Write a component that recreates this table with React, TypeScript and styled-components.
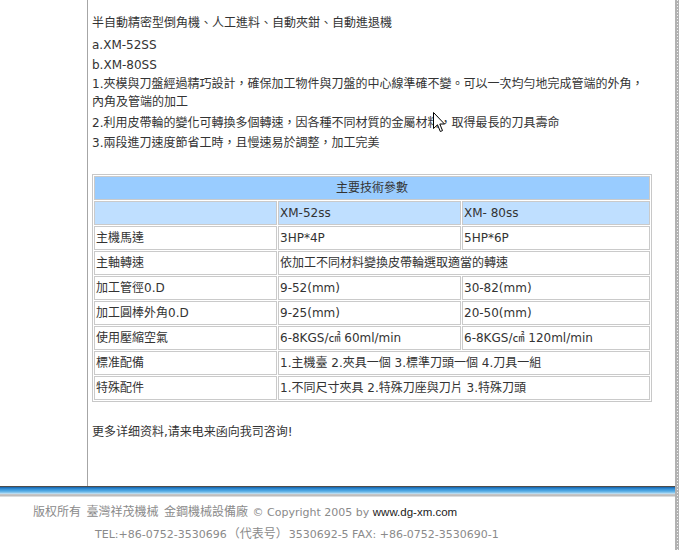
import React from "react";
import styled, { createGlobalStyle } from "styled-components";

const Global = createGlobalStyle`
  html, body { margin: 0; padding: 0; background: #fff; }
  body { font-family: "DejaVu Sans", "Noto Sans CJK TC", sans-serif; }
`;

const Page = styled.div`
  position: relative;
  display: flex;
  width: 679px;
  height: 550px;
  overflow: hidden;
  background: #fff;
`;

const Main = styled.div`
  width: 675px;
  display: flex;
  flex-direction: column;
`;

const Edge = styled.div`
  width: 4px;
  background-color: #b2b2b2;
  background-image: repeating-linear-gradient(to bottom, #f4f4f4 0 1px, transparent 1px 3px);
  background-size: 1px 100%;
  background-position: 2px 0;
  background-repeat: no-repeat;
`;

const Body = styled.div`
  display: flex;
  height: 486px;
`;

const Side = styled.div`
  width: 87px;
  border-right: 1px solid #a6a6a6;
`;

const Content = styled.div`
  width: 560px;
  padding: 13px 0 0 4px;
  font-size: 12px;
  color: #333;
`;

const Line = styled.div<{ $lh?: number; $mt?: number; $mb?: number }>`
  line-height: ${(p) => p.$lh ?? 20}px;
  margin-top: ${(p) => p.$mt ?? 0}px;
  margin-bottom: ${(p) => p.$mb ?? 0}px;
  white-space: nowrap;
`;

const Spec = styled.table`
  width: 560px;
  margin-top: 21px;
  border: 1px solid #c8c8c8;
  border-collapse: separate;
  border-spacing: 1px;
  table-layout: fixed;
  font-size: 12px;
  color: #333;
`;

const Col = styled.col<{ $w: number }>`
  width: ${(p) => p.$w}px;
`;

const Cell = styled.td<{ $bg?: string; $center?: boolean }>`
  height: 22px;
  padding: 0 1px;
  border: 1px solid #cacaca;
  background: ${(p) => p.$bg ?? "#fff"};
  text-align: ${(p) => (p.$center ? "center" : "left")};
  vertical-align: middle;
  line-height: 22px;
  white-space: nowrap;
  overflow: hidden;
`;

const Note = styled.div`
  margin-top: 20px;
  line-height: 20px;
`;

const Bar = styled.div`
  height: 11px;
  background: linear-gradient(
    to bottom,
    #4d4d4d 0 1px,
    #1b6db5 1px 2px,
    #2b84cc 2px 3px,
    #3a96da 3px 4px,
    #4aa3e0 4px 5px,
    #62b2e6 5px 6px,
    #86c5ec 6px 7px,
    #b6dbf2 7px 8px,
    #c6c6c6 8px 9px,
    #bdbdbd 9px 10px,
    #dcdcdc 10px 11px
  );
`;

const Footer = styled.div`
  padding-top: 4px;
  font-family: "DejaVu Sans", "Noto Sans CJK SC", sans-serif;
  font-size: 11px;
  color: #8a8a8a;
`;

const FootLine = styled.div<{ $indent: number }>`
  padding-left: ${(p) => p.$indent}px;
  line-height: 20px;
  white-space: nowrap;
`;

const Cjk = styled.span`
  font-family: "Noto Sans CJK TC", sans-serif;
  font-size: 12px;
  margin: 0 1px;
`;

const Site = styled.span`
  font-family: "Liberation Sans", Arial, sans-serif;
  font-size: 11.5px;
  color: #222;
`;

const Cursor = styled.svg`
  position: absolute;
  left: 433px;
  top: 112px;
`;

const rows: { label: string; a: string; b?: string }[] = [
  { label: "主機馬達", a: "3HP*4P", b: "5HP*6P" },
  { label: "主軸轉速", a: "依加工不同材料變換皮帶輪選取適當的轉速" },
  { label: "加工管徑0.D", a: "9-52(mm)", b: "30-82(mm)" },
  { label: "加工圓棒外角0.D", a: "9-25(mm)", b: "20-50(mm)" },
  { label: "使用壓縮空氣", a: "6-8KGS/㎠ 60ml/min", b: "6-8KGS/㎠ 120ml/min" },
  { label: "標准配備", a: "1.主機臺 2.夾具一個 3.標準刀頭一個 4.刀具一組" },
  { label: "特殊配件", a: "1.不同尺寸夾具 2.特殊刀座與刀片 3.特殊刀頭" },
];

export default function App() {
  return (
    <>
      <Global />
      <Page>
        <Main>
          <Body>
            <Side />
            <Content>
              <Line $mb={2}>半自動精密型倒角機、人工進料、自動夾鉗、自動進退機</Line>
              <Line>a.XM-52SS</Line>
              <Line>b.XM-80SS</Line>
              <Line $lh={18}>
                1.夾模與刀盤經過精巧設計，確保加工物件與刀盤的中心線準確不變。可以一次均勻地完成管端的外角，
                <br />
                內角及管端的加工
              </Line>
              <Line $mt={2}>2.利用皮帶輪的變化可轉換多個轉速，因各種不同材質的金屬材料，取得最長的刀具壽命</Line>
              <Line>3.兩段進刀速度節省工時，且慢速易於調整，加工完美</Line>
              <Spec>
                <colgroup>
                  <Col $w={183} />
                  <Col $w={183} />
                  <Col $w={188} />
                </colgroup>
                <tbody>
                  <tr>
                    <Cell colSpan={3} $bg="#99ccff" $center>
                      主要技術參數
                    </Cell>
                  </tr>
                  <tr>
                    <Cell $bg="#bfdfff" />
                    <Cell $bg="#bfdfff">XM-52ss</Cell>
                    <Cell $bg="#bfdfff">XM- 80ss</Cell>
                  </tr>
                  {rows.map((r) => (
                    <tr key={r.label}>
                      <Cell>{r.label}</Cell>
                      {r.b ? (
                        <>
                          <Cell>{r.a}</Cell>
                          <Cell>{r.b}</Cell>
                        </>
                      ) : (
                        <Cell colSpan={2}>{r.a}</Cell>
                      )}
                    </tr>
                  ))}
                </tbody>
              </Spec>
              <Note>更多详细资料,请来电来函向我司咨询!</Note>
            </Content>
          </Body>
          <Bar />
          <Footer>
            <FootLine $indent={32}>
              <Cjk>版权所有</Cjk> <Cjk>臺灣祥茂機械</Cjk> <Cjk>金鋼機械設備廠</Cjk> © Copyright 2005 by{" "}
              <Site>www.dg-xm.com</Site>
            </FootLine>
            <FootLine $indent={95}>
              TEL:+86-0752-3530696<Cjk>（代表号）</Cjk>3530692-5 FAX: +86-0752-3530690-1
            </FootLine>
          </Footer>
        </Main>
        <Edge />
        <Cursor width="13" height="21" viewBox="0 0 13 21">
          <path
            d="M0.5 0.5 L0.5 16.5 L4.5 12.8 L7.3 19.5 L9.5 18.6 L6.8 12 L11.5 12 Z"
            fill="#fff"
            stroke="#000"
            strokeWidth="1"
            strokeLinejoin="miter"
          />
        </Cursor>
      </Page>
    </>
  );
}
